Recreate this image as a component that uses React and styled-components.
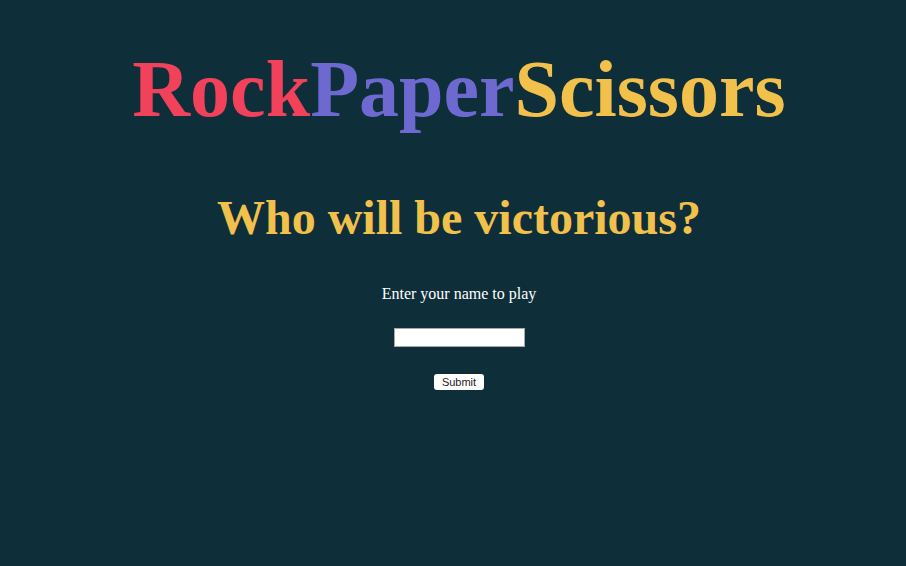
import React from "react";
import styled, { createGlobalStyle } from "styled-components";

const Global = createGlobalStyle`
  html, body { margin: 0; padding: 0; background: #0e2f3a; }
  body { font-family: "Liberation Serif", "Times New Roman", serif; color: #ffffff; }
`;

const Page = styled.main`
  min-height: 566px;
  display: flex;
  flex-direction: column;
  align-items: center;
  padding: 43px 0 0 12px;
  box-sizing: border-box;
`;

const Title = styled.h1`
  margin: 0;
  font-size: 80px;
  font-weight: 700;
  line-height: 1.15;
  letter-spacing: 0;
`;

const Word = styled.span`
  color: ${(p) => p.$color};
`;

const Subtitle = styled.h2`
  margin: 55px 0 0;
  font-size: 48px;
  font-weight: 700;
  color: #f2c14b;
  line-height: 1.15;
`;

const Form = styled.form`
  display: flex;
  flex-direction: column;
  align-items: center;
  margin-top: 39px;
`;

const Label = styled.label`
  font-size: 16px;
  line-height: 19px;
`;

const Input = styled.input`
  margin-top: 25px;
  width: 131px;
  height: 19px;
  box-sizing: border-box;
  border: 1px solid #a9a9a9;
  background: #ffffff;
  padding: 1px 2px;
  font-size: 13px;
  outline: none;
`;

const Button = styled.button`
  margin-top: 27px;
  width: 50px;
  height: 16px;
  box-sizing: border-box;
  padding: 0;
  border: none;
  border-radius: 3px;
  background: #ffffff;
  color: #222;
  font-family: "Liberation Sans", Arial, sans-serif;
  font-size: 11px;
  line-height: 16px;
`;

export default function App() {
  return (
    <>
      <Global />
      <Page>
        <Title>
          <Word $color="#f2415a">Rock</Word>
          <Word $color="#6d69d0">Paper</Word>
          <Word $color="#f2c14b">Scissors</Word>
        </Title>
        <Subtitle>Who will be victorious?</Subtitle>
        <Form onSubmit={(e) => e.preventDefault()}>
          <Label htmlFor="name">Enter your name to play</Label>
          <Input id="name" type="text" />
          <Button type="submit">Submit</Button>
        </Form>
      </Page>
    </>
  );
}
